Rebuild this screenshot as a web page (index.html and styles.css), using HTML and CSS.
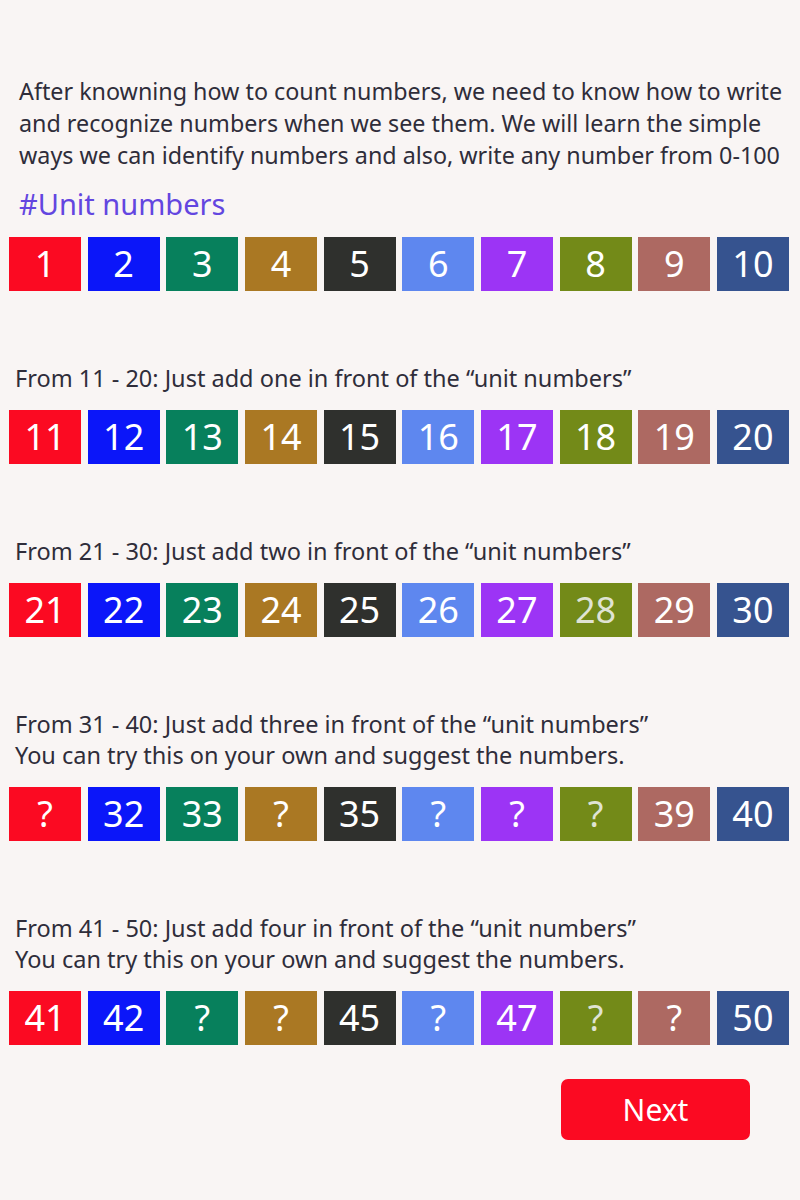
FILE: index.html
```html
<!DOCTYPE html>
<html>
<head>
<meta charset="utf-8">
<link rel="stylesheet" href="styles.css">
</head>
<body>
<main class="page">
  <p class="intro">After knowning how to count numbers, we need to know how to write and recognize numbers when we see them. We will learn the simple ways we can identify numbers and also, write any number from 0-100</p>
  <h2 class="title">#Unit numbers</h2>
  <div class="row">
    <div class="box c1">1</div><div class="box c2">2</div><div class="box c3">3</div><div class="box c4">4</div><div class="box c5">5</div><div class="box c6">6</div><div class="box c7">7</div><div class="box c8">8</div><div class="box c9">9</div><div class="box c10">10</div>
  </div>

  <section class="section">
    <p class="heading">From 11 - 20: Just add one in front of the “unit numbers”</p>
    <div class="row">
      <div class="box c1">11</div><div class="box c2">12</div><div class="box c3">13</div><div class="box c4">14</div><div class="box c5">15</div><div class="box c6">16</div><div class="box c7">17</div><div class="box c8">18</div><div class="box c9">19</div><div class="box c10">20</div>
    </div>
  </section>

  <section class="section">
    <p class="heading">From 21 - 30: Just add two in front of the “unit numbers”</p>
    <div class="row">
      <div class="box c1">21</div><div class="box c2">22</div><div class="box c3">23</div><div class="box c4">24</div><div class="box c5">25</div><div class="box c6">26</div><div class="box c7">27</div><div class="box c8 dim">28</div><div class="box c9">29</div><div class="box c10">30</div>
    </div>
  </section>

  <section class="section">
    <p class="heading">From 31 - 40: Just add three in front of the “unit numbers”<br>You can try this on your own and suggest the numbers.</p>
    <div class="row">
      <div class="box c1">?</div><div class="box c2">32</div><div class="box c3">33</div><div class="box c4">?</div><div class="box c5">35</div><div class="box c6">?</div><div class="box c7">?</div><div class="box c8 dim">?</div><div class="box c9">39</div><div class="box c10">40</div>
    </div>
  </section>

  <section class="section">
    <p class="heading">From 41 - 50: Just add four in front of the “unit numbers”<br>You can try this on your own and suggest the numbers.</p>
    <div class="row">
      <div class="box c1">41</div><div class="box c2">42</div><div class="box c3">?</div><div class="box c4">?</div><div class="box c5">45</div><div class="box c6">?</div><div class="box c7">47</div><div class="box c8 dim">?</div><div class="box c9">?</div><div class="box c10">50</div>
    </div>
  </section>

  <div class="actions">
    <button class="next">Next</button>
  </div>
</main>
</body>
</html>
```

FILE: styles.css
```css
html, body {
  margin: 0;
  padding: 0;
  background: #f9f5f4;
}
body {
  font-family: "Noto Sans", "Open Sans", sans-serif;
  color: #2f2d3a;
}
.page {
  width: 800px;
  padding-top: 75px;
  padding-bottom: 60px;
}
.intro {
  margin: 0;
  padding: 0 8px 0 19px;
  font-size: 23.3px;
  line-height: 32px;
}
.title {
  margin: 13px 0 13px;
  padding-left: 19px;
  font-size: 29px;
  line-height: 40px;
  font-weight: 400;
  color: #6346e0;
}
.row {
  display: flex;
  justify-content: space-between;
  padding: 0 11px 0 9px;
}
.box {
  width: 72px;
  height: 54px;
  line-height: 54px;
  text-align: center;
  color: #ffffff;
  font-size: 36px;
}
.box.dim { color: #dfe3d3; }
.c1 { background: #fb0a22; }
.c2 { background: #0b16f9; }
.c3 { background: #07805c; }
.c4 { background: #aa7823; }
.c5 { background: #2f302d; }
.c6 { background: #5e87ef; }
.c7 { background: #9c34f5; }
.c8 { background: #738a18; }
.c9 { background: #ad6962; }
.c10 { background: #36538f; }
.section {
  margin-top: 72px;
}
.heading {
  margin: 0 0 16px;
  padding-left: 15px;
  font-size: 23.5px;
  line-height: 31px;
}
.actions {
  display: flex;
  justify-content: flex-end;
  padding-right: 50px;
  margin-top: 34px;
}
.next {
  width: 189px;
  height: 61px;
  border: none;
  border-radius: 7px;
  background: #fb0a22;
  color: #ffffff;
  font-family: "Noto Sans", "Open Sans", sans-serif;
  font-size: 30px;
  padding: 0;
  cursor: pointer;
}
```
